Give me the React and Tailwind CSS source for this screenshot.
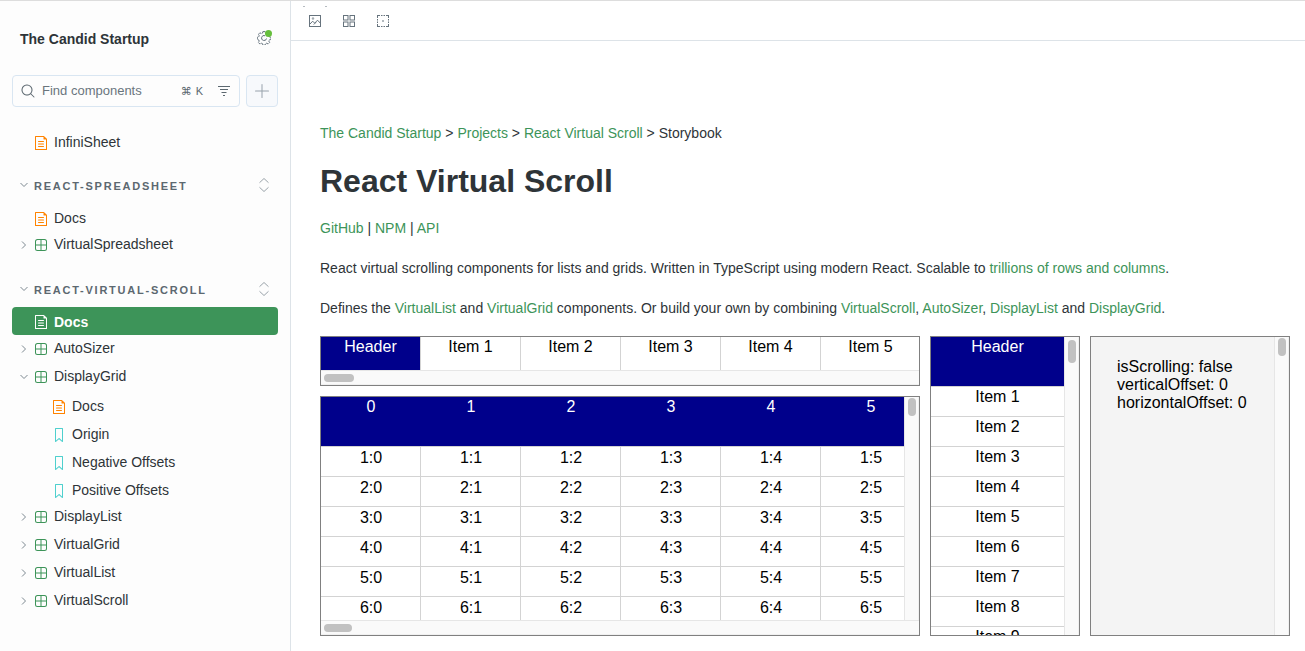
import React from "react";

const svg = { viewBox: "0 0 14 14", width: 14, height: 14, fill: "currentColor", "aria-hidden": true };

function DocumentIcon({ className = "" }) {
  return (
    <svg {...svg} className={`shrink-0 ${className}`}>
      <path d="M4 5.5a.5.5 0 01.5-.5h5a.5.5 0 010 1h-5a.5.5 0 01-.5-.5zM4.5 7.5a.5.5 0 000 1h5a.5.5 0 000-1h-5zM4 10.5a.5.5 0 01.5-.5h5a.5.5 0 010 1h-5a.5.5 0 01-.5-.5z" />
      <path
        fillRule="evenodd"
        clipRule="evenodd"
        d="M1.5 0a.5.5 0 00-.5.5v13a.5.5 0 00.5.5h11a.5.5 0 00.5-.5V3.207a.5.5 0 00-.146-.353L10.146.146A.5.5 0 009.793 0H1.5zM2 1h7.5v2a.5.5 0 00.5.5h2V13H2V1z"
      />
    </svg>
  );
}

function ComponentIcon({ className = "" }) {
  return (
    <svg {...svg} className={`shrink-0 ${className}`}>
      <path
        fillRule="evenodd"
        clipRule="evenodd"
        d="M3.5 1A2.5 2.5 0 001 3.5v7A2.5 2.5 0 003.5 13h7a2.5 2.5 0 002.5-2.5v-7A2.5 2.5 0 0010.5 1h-7zM12 6.5H7.5V2h3A1.5 1.5 0 0112 3.5v3zm0 1v3a1.5 1.5 0 01-1.5 1.5h-3V7.5H12zM6.5 12V7.5H2v3A1.5 1.5 0 003.5 12h3zM2 6.5h4.5V2h-3A1.5 1.5 0 002 3.5v3z"
      />
    </svg>
  );
}

function BookmarkIcon({ className = "" }) {
  return (
    <svg {...svg} className={`shrink-0 ${className}`}>
      <path
        fillRule="evenodd"
        clipRule="evenodd"
        d="M3.5 0h7a.5.5 0 01.5.5v13a.5.5 0 01-.454.498.462.462 0 01-.371-.118L7 11.159l-3.175 2.72a.46.46 0 01-.379.118A.5.5 0 013 13.5V.5a.5.5 0 01.5-.5zM4 12.413l2.664-2.284a.454.454 0 01.377-.128.498.498 0 01.284.12L10 12.412V1H4v11.413z"
      />
    </svg>
  );
}

function SearchIcon() {
  return (
    <svg {...svg} className="shrink-0">
      <path
        fillRule="evenodd"
        clipRule="evenodd"
        d="M9.544 10.206a5.5 5.5 0 11.662-.662.5.5 0 01.148.102l3 3a.5.5 0 01-.708.708l-3-3a.5.5 0 01-.102-.148zM10.5 6a4.5 4.5 0 11-9 0 4.5 4.5 0 019 0z"
      />
    </svg>
  );
}

function FilterIcon() {
  return (
    <svg {...svg}>
      <path d="M1 2h12v1H1zM3 5h8v1H3zM4.5 8h5v1h-5zM6 11h2v1H6z" />
    </svg>
  );
}

function PlusIcon() {
  return (
    <svg {...svg}>
      <path d="M6.5.5a.5.5 0 011 0v6h6a.5.5 0 010 1h-6v6a.5.5 0 01-1 0v-6h-6a.5.5 0 010-1h6z" />
    </svg>
  );
}

function CogIcon() {
  return (
    <svg {...svg} fill="none" stroke="currentColor">
      <path
        d="M5.9.6h2.2l.4 1.500 1.200.5 1.400-.8 1.500 1.500-.8 1.400.5 1.200 1.500.4v2.200l-1.500.4-.5 1.200.8 1.400-1.500 1.500-1.400-.8-1.200.5-.4 1.500H5.900l-.4-1.500-1.200-.5-1.400.8-1.500-1.500.8-1.400-.5-1.200-1.400-.4V6.300l1.400-.4.5-1.200-.8-1.400 1.500-1.500 1.400.8 1.200-.5z"
        strokeDasharray="3 .6"
        strokeLinejoin="round"
      />
      <path d="M8 4.700A2.500 2.500 0 109.500 7.500" />
    </svg>
  );
}

function PhotoIcon() {
  return (
    <svg {...svg}>
      <path d="M1 1h12v12H1zM2 2v10h10V2z" fillRule="evenodd" />
      <path d="M2 10L4.700 7.200l2 2L9.500 6.200l2.700 2.800M5.800 10.500L8 8.300" fill="none" stroke="currentColor" />
      <circle cx="5" cy="4.5" r="1.2" opacity=".6" />
    </svg>
  );
}

function GridIcon() {
  return (
    <svg {...svg} fill="none" stroke="currentColor">
      <rect x="1.5" y="1.5" width="4.5" height="4.5" />
      <rect x="8" y="1.5" width="4.5" height="4.5" />
      <rect x="1.5" y="8" width="4.5" height="4.5" />
      <rect x="8" y="8" width="4.5" height="4.5" />
    </svg>
  );
}

function OutlineIcon() {
  return (
    <svg {...svg}>
      <path d="M1 1h3v1H2v2H1zM5 1h1.500v1H5zM7.500 1H9v1H7.500zM10 1h3v3h-1V2h-2zM12 5h1v1.500h-1zM12 7.500h1V9h-1zM12 10h1v3h-3v-1h2zM7.500 12H9v1H7.500zM5 12h1.500v1H5zM1 10h1v2h2v1H1zM1 7.500h1V9H1zM1 5h1v1.500H1z" />
      <path d="M6 6h2v2H6z" opacity=".5" />
    </svg>
  );
}

function Chevron({ open }) {
  return (
    <svg viewBox="0 0 8 8" width="8" height="8" fill="none" stroke="#7d8890" className="shrink-0" aria-hidden="true">
      <path d={open ? "M.5 2L4 5.500 7.500 2" : "M2 .500L5.500 4 2 7.500"} />
    </svg>
  );
}

const kinds = {
  docs: <DocumentIcon className="mt-1 text-[#ff8300]" />,
  component: <ComponentIcon className="mt-1 text-[#3d9459]" />,
  story: <BookmarkIcon className="mt-1 text-[#4fd0ce]" />,
};

function Branch({ label, open = false, children }) {
  return (
    <li>
      <button type="button" aria-expanded={open} className="flex h-7 w-full items-start rounded pt-[3px] pl-2 text-left leading-5">
        <span className="mt-[7px] mr-1.5"><Chevron open={open} /></span>
        {kinds.component}
        <span className="ml-1.5">{label}</span>
      </button>
      {children && <ul>{children}</ul>}
    </li>
  );
}

function Leaf({ label, kind = "docs", nested = false, selected = false }) {
  return (
    <li>
      <a
        href="#"
        aria-current={selected ? "page" : undefined}
        className={`flex h-7 items-start gap-1.5 rounded pt-[5px] leading-5 ${nested ? "pl-10" : "pl-[22px]"} ${
          selected ? "bg-[#3d9459] font-bold text-white" : ""
        }`}
      >
        {selected ? <DocumentIcon className="mt-[3px]" /> : kinds[kind]}
        <span>{label}</span>
      </a>
    </li>
  );
}

function Section({ title, children }) {
  return (
    <section className="mt-4">
      <div className="mb-1 flex h-7 items-center justify-between pr-[7px] pl-2 text-[#5c6870]">
        <button type="button" aria-expanded="true" className="flex items-center gap-1.5 text-[11px] leading-4 font-bold tracking-[0.16em] uppercase">
          <Chevron open />
          <span className="pt-0.5">{title}</span>
        </button>
        <button type="button" aria-label={`Expand all in ${title}`} className="text-[#9aa3aa]">
          <svg viewBox="0 0 14 14" width="14" height="14" fill="none" stroke="currentColor" aria-hidden="true">
            <path d="M2.500 4.700L7 .500l4.500 4.200M2.500 9.300L7 13.500l4.500-4.200" />
          </svg>
        </button>
      </div>
      <ul>{children}</ul>
    </section>
  );
}

function Sidebar() {
  return (
    <aside className="w-[291px] shrink-0 border-r border-[#dde3e8] bg-[#fdfdfd] px-3 text-sm text-[#2e3438]">
      <div className="flex h-[74px] items-center justify-between pr-[7px] pl-2">
        <a href="#" className="pt-0.5 leading-5 font-bold">The Candid Startup</a>
        <button type="button" aria-label="Settings" className="relative text-[#66737d]">
          <CogIcon />
          <span className="absolute -top-px -right-px size-[7px] rounded-full bg-[#66bf3c]" />
        </button>
      </div>
      <div className="mb-5 flex gap-1.5">
        <div className="flex h-8 min-w-0 flex-1 items-center rounded border border-[#d9e6f2] px-2 text-[#5c6870]">
          <SearchIcon />
          <input
            aria-label="Find components"
            placeholder="Find components"
            className="ml-[7px] min-w-0 flex-1 bg-transparent text-[13px] outline-none placeholder:text-[#6a757d]"
          />
          <kbd className="mr-3.5 flex gap-1 font-[Liberation_Sans,DejaVu_Sans,sans-serif] text-[11px] leading-4">
            <span>⌘</span>
            <span>K</span>
          </kbd>
          <button type="button" aria-label="Filter components"><FilterIcon /></button>
        </div>
        <button type="button" aria-label="Create a new story" className="flex size-8 items-center justify-center rounded border border-[#d9e6f2] bg-[#f7f9fc] text-[#98a2ab]">
          <PlusIcon />
        </button>
      </div>
      <nav aria-label="Stories">
        <ul><Leaf label="InfiniSheet" /></ul>
        <Section title="react-spreadsheet">
          <Leaf label="Docs" />
          <Branch label="VirtualSpreadsheet" />
        </Section>
        <Section title="react-virtual-scroll">
          <Leaf label="Docs" selected />
          <Branch label="AutoSizer" />
          <Branch label="DisplayGrid" open>
            <Leaf label="Docs" nested />
            <Leaf label="Origin" kind="story" nested />
            <Leaf label="Negative Offsets" kind="story" nested />
            <Leaf label="Positive Offsets" kind="story" nested />
          </Branch>
          <Branch label="DisplayList" />
          <Branch label="VirtualGrid" />
          <Branch label="VirtualList" />
          <Branch label="VirtualScroll" />
        </Section>
      </nav>
    </aside>
  );
}

function Toolbar() {
  const tools = [
    ["Change background", <PhotoIcon />],
    ["Apply a grid", <GridIcon />],
    ["Apply outlines", <OutlineIcon />],
  ];
  return (
    <div role="toolbar" className="relative flex h-10 items-center gap-1.5 border-b border-[#dde3e8] px-2.5 text-[#66737d]">
      <span className="absolute top-[5px] left-3 h-px w-0.5 bg-[#b5bbc0]" />
      <span className="absolute top-[5px] left-[34px] h-px w-0.5 bg-[#b5bbc0]" />
      {tools.map(([name, icon]) => (
        <button key={name} type="button" aria-label={name} className="flex size-7 items-center justify-center">
          {icon}
        </button>
      ))}
    </div>
  );
}

function Link({ children }) {
  return <a href="#" className="text-[#3d9459]">{children}</a>;
}

function VerticalBar({ thumb }) {
  return (
    <div className="w-[15px] shrink-0 border-x border-l-[#e6e6e6] border-r-[#f0f0f0] bg-[#fafafa] px-[3px] pt-px">
      <div className={`w-2 rounded-full bg-[#c1c1c1] ${thumb}`} />
    </div>
  );
}

function HorizontalBar({ thumb }) {
  return (
    <div className="h-[15px] shrink-0 border-y border-t-[#e6e6e6] border-b-[#f0f0f0] bg-[#fafafa] px-[3px] pt-[3px]">
      <div className={`h-2 rounded-full bg-[#c1c1c1] ${thumb}`} />
    </div>
  );
}

const columns = [0, 1, 2, 3, 4, 5];
const rows = [1, 2, 3, 4, 5, 6];
const items = [1, 2, 3, 4, 5, 6, 7, 8, 9];

function HorizontalList() {
  return (
    <div className="flex h-[50px] flex-col border border-[#808080]">
      <ul className="flex min-h-0 flex-1 overflow-hidden text-center">
        {columns.map((c) => (
          <li key={c} className={`w-[100px] shrink-0 border-r border-[#d3d3d3] pt-px ${c === 0 ? "bg-[#00008b] text-white" : ""}`}>
            {c === 0 ? "Header" : `Item ${c}`}
          </li>
        ))}
      </ul>
      <HorizontalBar thumb="w-[30px]" />
    </div>
  );
}

function DataGrid() {
  return (
    <div className="flex h-[240px] flex-col border border-[#808080]">
      <div className="flex min-h-0 flex-1">
        <div className="min-w-0 flex-1 overflow-hidden">
          <table className="w-[600px] table-fixed border-separate border-spacing-0 text-center">
            <thead>
              <tr className="h-[50px] bg-[#00008b] text-white">
                {columns.map((c) => (
                  <th key={c} scope="col" className="border-b border-[#d3d3d3] p-0 pt-px align-top font-normal">{c}</th>
                ))}
              </tr>
            </thead>
            <tbody>
              {rows.map((r) => (
                <tr key={r} className="h-[30px]">
                  {columns.map((c) => (
                    <td key={c} className="border-r border-b border-[#d3d3d3] p-0 pt-0.5 pl-px align-top">{`${r}:${c}`}</td>
                  ))}
                </tr>
              ))}
            </tbody>
          </table>
        </div>
        <VerticalBar thumb="h-[18px]" />
      </div>
      <HorizontalBar thumb="w-7" />
    </div>
  );
}

function VerticalList() {
  return (
    <div className="flex h-[300px] border border-[#808080]">
      <ul className="min-w-0 flex-1 overflow-hidden text-center">
        <li className="h-[50px] border-b border-[#d3d3d3] bg-[#00008b] pt-px text-white">Header</li>
        {items.map((i) => (
          <li key={i} className="h-[30px] border-b border-[#d3d3d3] pt-px">{`Item ${i}`}</li>
        ))}
      </ul>
      <VerticalBar thumb="mt-0.5 h-[23px]" />
    </div>
  );
}

function ScrollState() {
  return (
    <div className="flex h-[300px] border border-[#808080] bg-[#f4f4f4]">
      <div className="min-w-0 flex-1 overflow-hidden pt-[21px] pl-[26px]">
        <div>isScrolling: false</div>
        <div>verticalOffset: 0</div>
        <div>horizontalOffset: 0</div>
      </div>
      <VerticalBar thumb="h-[18px]" />
    </div>
  );
}

export default function App() {
  return (
    <div className="flex min-h-screen border-t border-[#dddddd] bg-white font-[Liberation_Sans,Arial,sans-serif]">
      <Sidebar />
      <div className="min-w-0 flex-1">
        <Toolbar />
        <main className="pt-20 pr-[15px] pl-[29px] text-sm leading-6 text-[#2e3438]">
          <nav aria-label="Breadcrumb">
            <Link>The Candid Startup</Link> &gt; <Link>Projects</Link> &gt; <Link>React Virtual Scroll</Link> &gt; Storybook
          </nav>
          <h1 className="mt-4 mb-3.5 text-[32px] leading-[41px] font-bold">React Virtual Scroll</h1>
          <p className="mb-4">
            <Link>GitHub</Link> | <Link>NPM</Link> | <Link>API</Link>
          </p>
          <p className="mb-4">
            React virtual scrolling components for lists and grids. Written in TypeScript using modern React. Scalable to{" "}
            <Link>trillions of rows and columns</Link>.
          </p>
          <p className="mb-4">
            Defines the <Link>VirtualList</Link> and <Link>VirtualGrid</Link> components. Or build your own by combining{" "}
            <Link>VirtualScroll</Link>, <Link>AutoSizer</Link>, <Link>DisplayList</Link> and <Link>DisplayGrid</Link>.
          </p>
          <div className="grid grid-cols-[minmax(0,1fr)_150px_200px] gap-2.5 text-base leading-[18px] text-black">
            <div className="flex min-w-0 flex-col gap-2.5">
              <HorizontalList />
              <DataGrid />
            </div>
            <VerticalList />
            <ScrollState />
          </div>
        </main>
      </div>
    </div>
  );
}
